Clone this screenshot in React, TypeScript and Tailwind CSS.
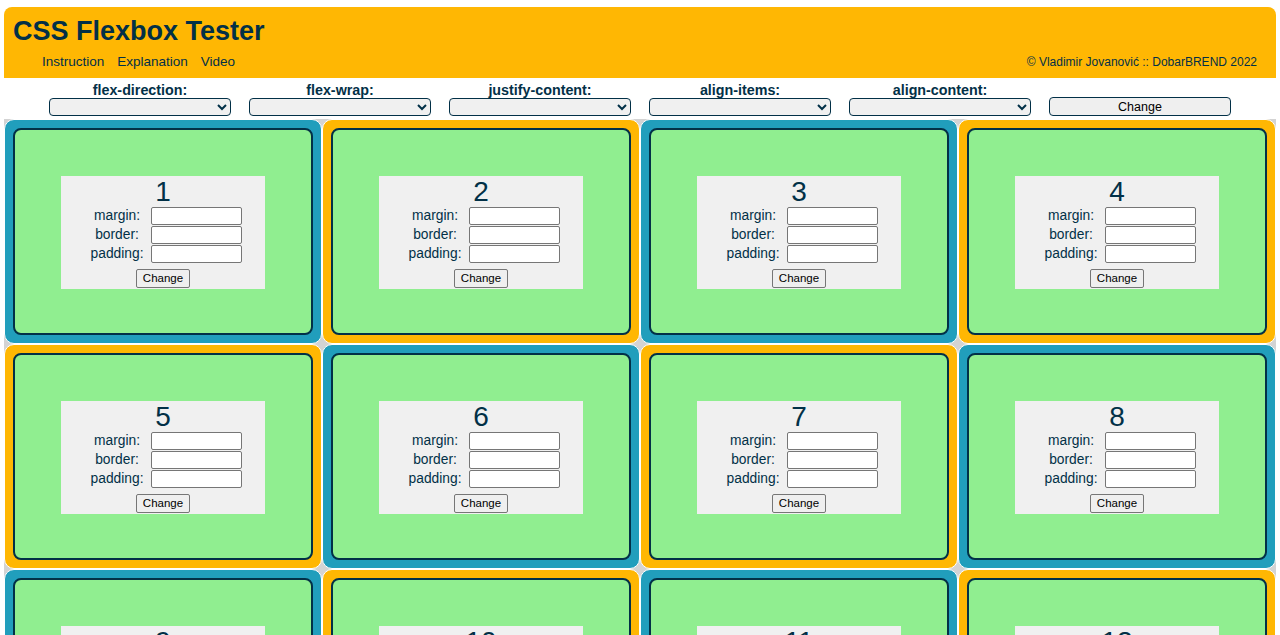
import React from 'react';

const controls = ['flex-direction:', 'flex-wrap:', 'justify-content:', 'align-items:', 'align-content:'];

const Box: React.FC<{ n: number }> = ({ n }) => {
  const row = Math.floor((n - 1) / 4);
  const col = (n - 1) % 4;
  const teal = (row + col) % 2 === 0;
  return (
    <div
      className={`h-[225px] border border-white rounded-[10px] p-[8px] ${teal ? 'bg-[#219ebc]' : 'bg-[#ffb703]'}`}
    >
      <div className="h-full rounded-[8px] border-2 border-[#023047] bg-[#90ee90] flex items-center justify-center">
        <div className="w-[204px] mt-[2px] bg-[#f0f0f0] pt-[1px] pb-[1px] flex flex-col items-center">
          <div className="text-[28px] leading-[30px] h-[30px]">{n}</div>
          <div className="grid grid-cols-[62px_91px] gap-x-[3px] items-center text-[13.8px] leading-[18px] mr-[-2px]">
            <span className="text-center">margin:</span>
            <input className="h-[18px] border border-[#767676] rounded-[2px] bg-white" />
            <span className="text-center">border:</span>
            <input className="h-[18px] border border-[#767676] rounded-[2px] bg-white mt-[1px]" />
            <span className="text-center">padding:</span>
            <input className="h-[18px] border border-[#767676] rounded-[2px] bg-white mt-[1px]" />
          </div>
          <button className="mt-[6px] h-[19px] px-[6px] text-[11.5px] text-black bg-[#efefef] border border-[#767676] rounded-[2px]">
            Change
          </button>
        </div>
      </div>
    </div>
  );
};

export default function App() {
  return (
    <div className="min-h-screen bg-white px-[4px] pt-[7px] font-['Liberation_Sans',Arial,sans-serif] text-[#023047]">
      <header className="h-[71px] rounded-t-[8px] bg-[#ffb703] pl-[9px] pr-[19px] pt-[9px]">
        <h1 className="text-[27px] font-bold leading-[30px]">CSS Flexbox Tester</h1>
        <div className="mt-[8px] flex items-end justify-between">
          <nav className="pl-[29px] flex gap-[13px] text-[13.5px] leading-[16px]">
            <a>Instruction</a>
            <a>Explanation</a>
            <a>Video</a>
          </nav>
          <span className="text-[12px] leading-[16px]">© Vladimir Jovanović :: DobarBREND 2022</span>
        </div>
      </header>

      <div className="flex justify-center pt-[4px] pb-[3px]">
        {controls.map((c) => (
          <div key={c} className="w-[200px] flex flex-col items-center">
            <label className="text-[14.3px] font-bold leading-[16px]">{c}</label>
            <select className="w-[182px] h-[18px] text-[12px] bg-[#f0f0f0] border border-[#023047] rounded-[4px]">
              <option></option>
            </select>
          </div>
        ))}
        <div className="w-[200px] flex flex-col items-center justify-end">
          <button className="w-[182px] h-[19px] text-[12.5px] leading-[16px] text-black bg-[#efefef] border border-[#023047] rounded-[4px]">
            Change
          </button>
        </div>
      </div>

      <div className="grid grid-cols-4 bg-[#d3d3d3]">
        {Array.from({ length: 12 }, (_, i) => (
          <Box key={i} n={i + 1} />
        ))}
      </div>
    </div>
  );
}
